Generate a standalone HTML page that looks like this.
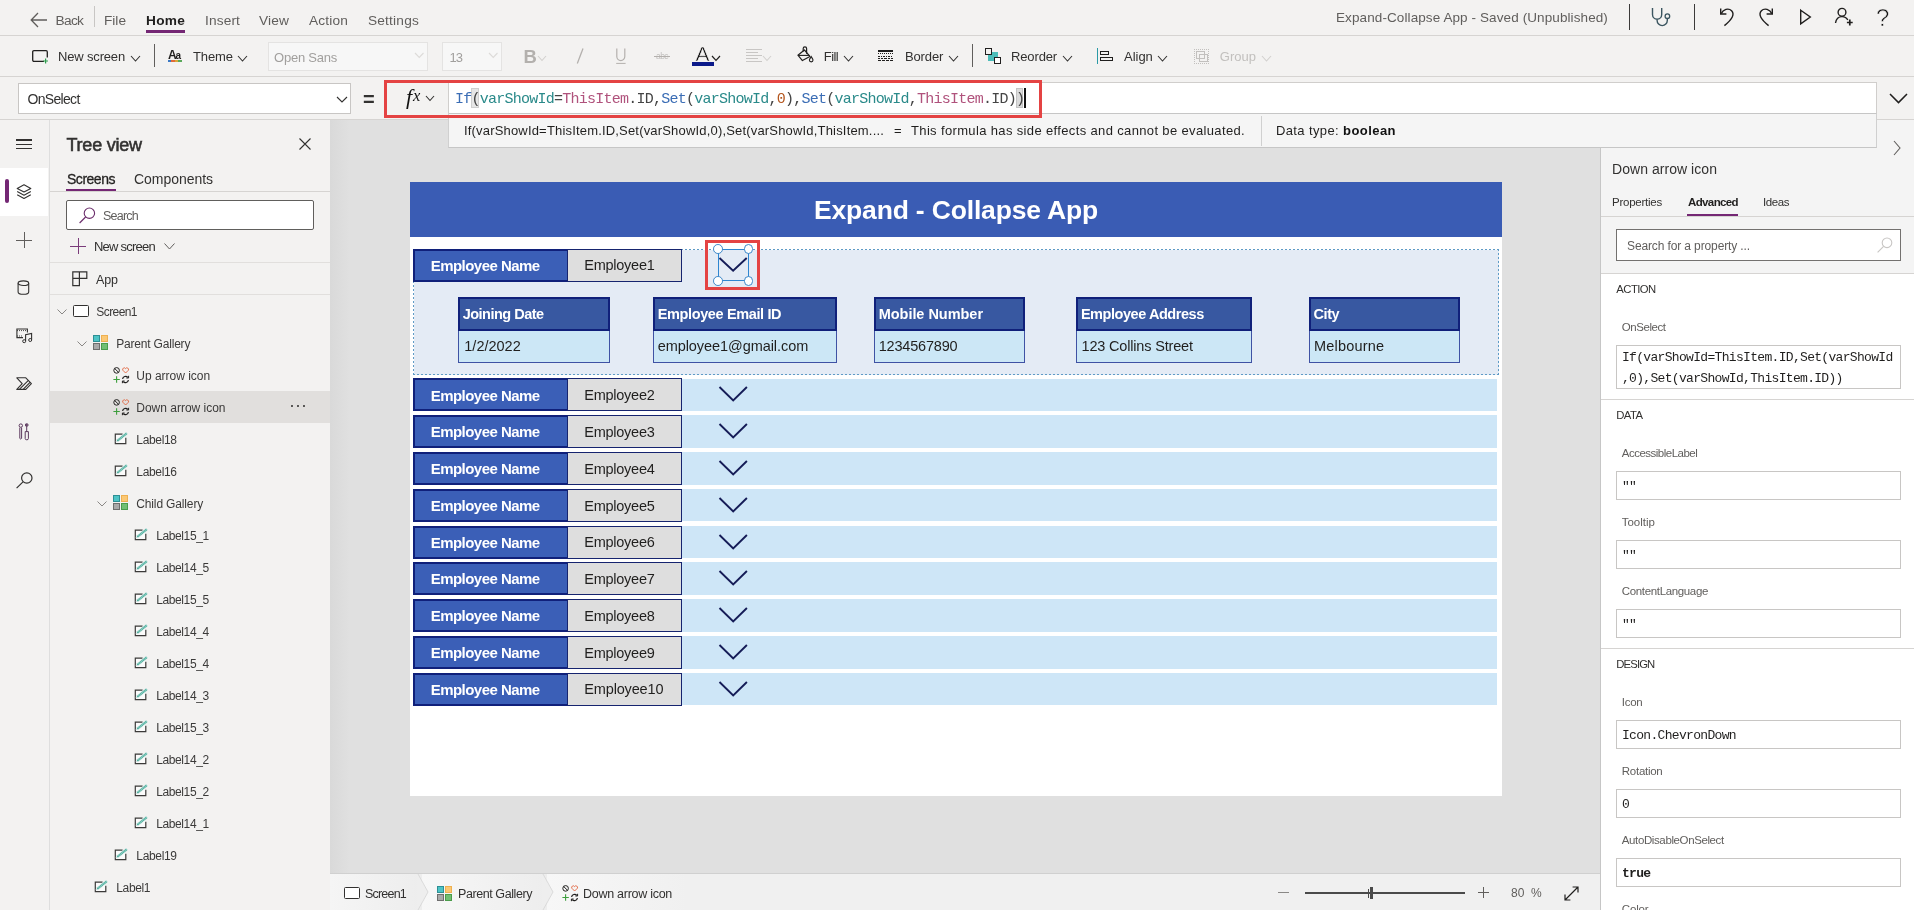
<!DOCTYPE html>
<html lang="en"><head><meta charset="utf-8"><title>Expand-Collapse App - Power Apps</title>
<style>
html,body{margin:0;padding:0;}
body{width:1914px;height:910px;overflow:hidden;background:#f3f2f1;position:relative;font-family:"Liberation Sans",sans-serif;}
#root{position:absolute;left:0;top:0;width:1914px;height:910px;overflow:hidden;will-change:transform;}
.a{position:absolute;box-sizing:border-box;}
.t{white-space:pre;}
svg{overflow:visible;}
.f-mono{font-family:"Liberation Mono",monospace;}
.f-dv{font-family:"DejaVu Sans",sans-serif;}
.f-serif{font-family:"Liberation Serif",serif;}
</style></head><body>
<div id="root">
<div class="a" style="left:0px;top:0px;width:1914px;height:910px;background:#f3f2f1;"></div>
<div class="a" style="left:330px;top:119px;width:1270px;height:754px;background:#e0e0e0;"></div>
<div class="a" style="left:330px;top:119px;width:20px;height:754px;background:linear-gradient(90deg,#d9d9d9,#e0e0e0);"></div>
<div class="a" style="left:1600px;top:119px;width:314px;height:791px;background:#ffffff;"></div>
<div class="a" style="left:1600px;top:119px;width:314px;height:154px;background:#f4f4f4;"></div>
<div class="a" style="left:1599.5px;top:147px;width:1.5px;height:763px;background:#c6c6c6;"></div>
<div class="a" style="left:330px;top:873px;width:1270px;height:37px;background:#f0f0f0;"></div>
<div class="a" style="left:330px;top:873px;width:1270px;height:1px;background:#d0d0d0;"></div>
<div class="a" style="left:330px;top:874px;width:92px;height:36px;background:linear-gradient(90deg,#f5f5f5,#ededed);"></div>
<div class="a" style="left:422px;top:874px;width:125px;height:36px;background:linear-gradient(90deg,#f7f7f7,#ededed);"></div>
<div class="a" style="left:547px;top:874px;width:140px;height:36px;background:linear-gradient(90deg,#f7f7f7,#f0f0f0);"></div>
<div class="a" style="left:0px;top:35px;width:1914px;height:1px;background:#d6d4d2;"></div>
<div class="a" style="left:0px;top:76px;width:1914px;height:1px;background:#d6d4d2;"></div>
<div class="a" style="left:0px;top:119px;width:1914px;height:1px;background:#d6d4d2;"></div>
<svg class="a" style="left:30px;top:12px;" width="18" height="16" viewBox="0 0 18 16"><path d="M17 8 H1.5 M8 1 L1.2 8 L8 15" fill="none" stroke="#605e5c" stroke-width="1.3"/></svg>
<span class="a t" style="left:55.5px;top:11.6px;font-size:13.7px;line-height:18px;color:#605e5c;letter-spacing:-0.659px;">Back</span>
<div class="a" style="left:94px;top:6px;width:1px;height:21px;background:#c8c6c4;"></div>
<span class="a t" style="left:104px;top:11.6px;font-size:13.7px;line-height:18px;color:#605e5c;letter-spacing:-0.016px;">File</span>
<span class="a t" style="left:146px;top:11.6px;font-size:13.7px;line-height:18px;color:#201f1e;letter-spacing:0.242px;font-weight:700;">Home</span>
<div class="a" style="left:146px;top:30px;width:39px;height:2.5px;background:#742774;"></div>
<span class="a t" style="left:205px;top:11.6px;font-size:13.7px;line-height:18px;color:#605e5c;letter-spacing:0.128px;">Insert</span>
<span class="a t" style="left:259px;top:11.6px;font-size:13.7px;line-height:18px;color:#605e5c;letter-spacing:0.145px;">View</span>
<span class="a t" style="left:309px;top:11.6px;font-size:13.7px;line-height:18px;color:#605e5c;letter-spacing:0.159px;">Action</span>
<span class="a t" style="left:368px;top:11.6px;font-size:13.7px;line-height:18px;color:#605e5c;letter-spacing:0.191px;">Settings</span>
<span class="a t" style="left:1336px;top:9.3px;font-size:13.5px;line-height:18px;color:#605e5c;letter-spacing:0.099px;">Expand-Collapse App - Saved (Unpublished)</span>
<div class="a" style="left:1628.5px;top:4px;width:1px;height:26px;background:#3b3a39;"></div>
<div class="a" style="left:1694px;top:4px;width:1px;height:26px;background:#3b3a39;"></div>
<span class="a t" style="left:58px;top:48.0px;font-size:13px;line-height:17px;color:#323130;letter-spacing:-0.164px;">New screen</span>
<svg class="a" style="left:130.0px;top:54.5px;" width="11" height="7" viewBox="0 0 11 7"><path d="M1 1 L5.5 6 L10 1" fill="none" stroke="#323130" stroke-width="1.1"/></svg>
<div class="a" style="left:154px;top:44px;width:1px;height:23px;background:#605e5c;"></div>
<span class="a t" style="left:193px;top:48.0px;font-size:13px;line-height:17px;color:#323130;letter-spacing:-0.094px;">Theme</span>
<svg class="a" style="left:237.0px;top:54.5px;" width="11" height="7" viewBox="0 0 11 7"><path d="M1 1 L5.5 6 L10 1" fill="none" stroke="#323130" stroke-width="1.1"/></svg>
<div class="a" style="left:268px;top:41.5px;width:160px;height:29px;background:#f7f7f7;border:1px solid #e4e3e2;"></div>
<span class="a t" style="left:274px;top:49.0px;font-size:13px;line-height:17px;color:#a19f9d;letter-spacing:-0.227px;">Open Sans</span>
<svg class="a" style="left:413.75px;top:52.25px;" width="10.5" height="6.5" viewBox="0 0 10.5 6.5"><path d="M1 1 L5.25 5.5 L9.5 1" fill="none" stroke="#dddbd9" stroke-width="1.1"/></svg>
<div class="a" style="left:442px;top:41.5px;width:60px;height:29px;background:#f7f7f7;border:1px solid #e4e3e2;"></div>
<span class="a t" style="left:449.4px;top:49.0px;font-size:13px;line-height:17px;color:#a19f9d;letter-spacing:-0.934px;">13</span>
<svg class="a" style="left:487.75px;top:52.25px;" width="10.5" height="6.5" viewBox="0 0 10.5 6.5"><path d="M1 1 L5.25 5.5 L9.5 1" fill="none" stroke="#dddbd9" stroke-width="1.1"/></svg>
<span class="a t" style="left:823.8px;top:48.0px;font-size:13px;line-height:17px;color:#323130;letter-spacing:-0.602px;">Fill</span>
<svg class="a" style="left:842.5px;top:54.5px;" width="11" height="7" viewBox="0 0 11 7"><path d="M1 1 L5.5 6 L10 1" fill="none" stroke="#323130" stroke-width="1.1"/></svg>
<span class="a t" style="left:905px;top:48.0px;font-size:13px;line-height:17px;color:#323130;letter-spacing:-0.139px;">Border</span>
<svg class="a" style="left:948.0px;top:54.5px;" width="11" height="7" viewBox="0 0 11 7"><path d="M1 1 L5.5 6 L10 1" fill="none" stroke="#323130" stroke-width="1.1"/></svg>
<div class="a" style="left:972px;top:44px;width:1px;height:23px;background:#605e5c;"></div>
<span class="a t" style="left:1011px;top:48.0px;font-size:13px;line-height:17px;color:#323130;letter-spacing:-0.138px;">Reorder</span>
<svg class="a" style="left:1061.5px;top:54.5px;" width="11" height="7" viewBox="0 0 11 7"><path d="M1 1 L5.5 6 L10 1" fill="none" stroke="#323130" stroke-width="1.1"/></svg>
<span class="a t" style="left:1124.1px;top:48.0px;font-size:13px;line-height:17px;color:#323130;letter-spacing:-0.044px;">Align</span>
<svg class="a" style="left:1157.0px;top:54.5px;" width="11" height="7" viewBox="0 0 11 7"><path d="M1 1 L5.5 6 L10 1" fill="none" stroke="#323130" stroke-width="1.1"/></svg>
<span class="a t" style="left:1219.8px;top:48.0px;font-size:13px;line-height:17px;color:#c2c0be;letter-spacing:-0.008px;">Group</span>
<svg class="a" style="left:1260.8px;top:54.5px;" width="11" height="7" viewBox="0 0 11 7"><path d="M1 1 L5.5 6 L10 1" fill="none" stroke="#d2d0ce" stroke-width="1.1"/></svg>
<div class="a" style="left:18px;top:83px;width:333px;height:31px;background:#ffffff;border:1px solid #c8c6c4;"></div>
<span class="a t" style="left:27.6px;top:90.4px;font-size:14px;line-height:18px;color:#323130;letter-spacing:-0.699px;">OnSelect</span>
<svg class="a" style="left:335.5px;top:95.5px;" width="12" height="7" viewBox="0 0 12 7"><path d="M1 1 L6.0 6 L11 1" fill="none" stroke="#323130" stroke-width="1.1"/></svg>
<span class="a t" style="left:363px;top:86.0px;font-size:20px;line-height:26px;color:#323130;letter-spacing:2.312px;font-weight:700;">=</span>
<div class="a" style="left:448px;top:82px;width:1429px;height:32px;background:#ffffff;border:1px solid #d0cecc;border-bottom-color:#c6c6c6;"></div>
<div class="a" style="left:389px;top:84px;width:59px;height:30px;background:#f3f2f1;"></div>
<div class="a" style="left:448px;top:114px;width:1429px;height:34px;background:#f5f5f5;border:1px solid #d0d0d0;border-bottom-color:#c6c6c6;border-top:none;"></div>
<div class="a" style="left:384px;top:80px;width:658px;height:38px;border:3px solid #e44343;"></div>
<span class="a t f-serif" style="left:406px;top:81.5px;font-size:22px;line-height:29px;color:#111111;font-style:italic;">f</span>
<span class="a t f-serif" style="left:413px;top:85.1px;font-size:16.5px;line-height:21px;color:#111111;font-style:italic;">x</span>
<svg class="a" style="left:425.0px;top:95.25px;" width="10" height="6.5" viewBox="0 0 10 6.5"><path d="M1 1 L5.0 5.5 L9 1" fill="none" stroke="#323130" stroke-width="1.1"/></svg>
<div class="a" style="left:448px;top:85px;width:1px;height:29px;background:#d0cecc;"></div>
<div class="a" style="left:470.5px;top:88px;width:8.25px;height:20px;background:#e6e6e6;border:1px solid #cfcfcf;"></div>
<div class="a" style="left:1016.0px;top:88px;width:7.25px;height:20px;background:#dcdcdc;border:1px solid #c4c4c4;"></div>
<span class="a t f-mono" style="left:455px;top:90.1px;font-size:15px;line-height:20px;letter-spacing:-0.752px;color:#444;"><span style="color:#3b6db5">If</span><span style="color:#444">(</span><span style="color:#2a8a8a">varShowId</span><span style="color:#444">=</span><span style="color:#b0527c">ThisItem</span><span style="color:#444">.ID,</span><span style="color:#3b6db5">Set</span><span style="color:#444">(</span><span style="color:#2a8a8a">varShowId</span><span style="color:#444">,</span><span style="color:#b4561e">0</span><span style="color:#444">),</span><span style="color:#3b6db5">Set</span><span style="color:#444">(</span><span style="color:#2a8a8a">varShowId</span><span style="color:#444">,</span><span style="color:#b0527c">ThisItem</span><span style="color:#444">.ID))</span></span>
<div class="a" style="left:1023.75px;top:88px;width:2px;height:20px;background:#111;"></div>
<span class="a t" style="left:464px;top:121.5px;font-size:13px;line-height:17px;color:#201f1e;letter-spacing:0.179px;">If(varShowId=ThisItem.ID,Set(varShowId,0),Set(varShowId,ThisItem....</span>
<span class="a t" style="left:894px;top:121.5px;font-size:13px;line-height:17px;color:#201f1e;letter-spacing:0.406px;">=</span>
<span class="a t" style="left:911px;top:121.5px;font-size:13px;line-height:17px;color:#201f1e;letter-spacing:0.355px;">This formula has side effects and cannot be evaluated.</span>
<div class="a" style="left:1261px;top:116px;width:1px;height:30px;background:#d0d0d0;"></div>
<span class="a t" style="left:1276px;top:121.5px;font-size:13px;line-height:17px;color:#201f1e;letter-spacing:0.375px;">Data type: </span>
<span class="a t" style="left:1343px;top:121.5px;font-size:13px;line-height:17px;color:#111;letter-spacing:0.451px;font-weight:700;">boolean</span>
<svg class="a" style="left:1888.5px;top:93px;" width="19" height="11" viewBox="0 0 19 11"><path d="M1 1 L9.5 9.6 L18 1" fill="none" stroke="#201f1e" stroke-width="1.5"/></svg>
<svg class="a" style="left:1893px;top:140px;" width="8" height="16" viewBox="0 0 8 16"><path d="M1 1 L7 8 L1 15" fill="none" stroke="#605e5c" stroke-width="1.1"/></svg>
<div class="a" style="left:0px;top:168px;width:48px;height:47.5px;background:#ffffff;"></div>
<div class="a" style="left:5px;top:179px;width:3.5px;height:24px;background:#742774;border-radius:2px;"></div>
<div class="a" style="left:49px;top:120px;width:1px;height:790px;background:#dedede;"></div>
<span class="a t" style="left:66.5px;top:133.5px;font-size:18px;line-height:23px;color:#323130;letter-spacing:-0.229px;-webkit-text-stroke:0.55px #323130;">Tree view</span>
<svg class="a" style="left:299px;top:138px;" width="12" height="12" viewBox="0 0 12 12"><path d="M0.5 0.5 L11.5 11.5 M11.5 0.5 L0.5 11.5" fill="none" stroke="#323130" stroke-width="1.1"/></svg>
<span class="a t" style="left:67px;top:169.5px;font-size:14px;line-height:18px;color:#201f1e;letter-spacing:-0.480px;-webkit-text-stroke:0.3px #201f1e;">Screens</span>
<div class="a" style="left:66px;top:189px;width:50px;height:2px;background:#742774;"></div>
<span class="a t" style="left:134px;top:169.5px;font-size:14px;line-height:18px;color:#323130;letter-spacing:-0.039px;">Components</span>
<div class="a" style="left:50px;top:191px;width:280px;height:1px;background:#d6d4d2;"></div>
<div class="a" style="left:66px;top:200px;width:248px;height:30px;background:#ffffff;border:1px solid #605e5c;border-radius:2px;"></div>
<span class="a t" style="left:103px;top:207.5px;font-size:12.5px;line-height:16px;color:#605e5c;letter-spacing:-0.768px;">Search</span>
<span class="a t" style="left:94px;top:238.0px;font-size:13px;line-height:17px;color:#323130;letter-spacing:-0.764px;">New screen</span>
<svg class="a" style="left:164px;top:243px;" width="11" height="7" viewBox="0 0 11 7"><path d="M0.5 0.5 L5.5 6 L10.5 0.5" fill="none" stroke="#605e5c" stroke-width="1"/></svg>
<div class="a" style="left:50px;top:262px;width:280px;height:1px;background:#e1dfdd;"></div>
<span class="a t" style="left:96px;top:271.5px;font-size:12.5px;line-height:16px;color:#323130;letter-spacing:-0.083px;">App</span>
<div class="a" style="left:50px;top:294px;width:280px;height:1px;background:#e1dfdd;"></div>
<div class="a" style="left:50px;top:391px;width:280px;height:32px;background:#e1dfdd;"></div>
<span class="a t" style="left:96.3px;top:303.5px;font-size:12px;line-height:16px;color:#3b3a39;letter-spacing:-0.586px;">Screen1</span>
<span class="a t" style="left:116.3px;top:335.5px;font-size:12px;line-height:16px;color:#3b3a39;letter-spacing:-0.200px;">Parent Gallery</span>
<span class="a t" style="left:136.3px;top:367.5px;font-size:12px;line-height:16px;color:#3b3a39;letter-spacing:-0.018px;">Up arrow icon</span>
<span class="a t" style="left:136.3px;top:399.5px;font-size:12px;line-height:16px;color:#3b3a39;letter-spacing:-0.012px;">Down arrow icon</span>
<span class="a t" style="left:136.3px;top:431.5px;font-size:12px;line-height:16px;color:#3b3a39;letter-spacing:-0.331px;">Label18</span>
<span class="a t" style="left:136.3px;top:463.5px;font-size:12px;line-height:16px;color:#3b3a39;letter-spacing:-0.331px;">Label16</span>
<span class="a t" style="left:136.3px;top:495.5px;font-size:12px;line-height:16px;color:#3b3a39;letter-spacing:-0.146px;">Child Gallery</span>
<span class="a t" style="left:156.3px;top:527.5px;font-size:12px;line-height:16px;color:#3b3a39;letter-spacing:-0.407px;">Label15_1</span>
<span class="a t" style="left:156.3px;top:559.5px;font-size:12px;line-height:16px;color:#3b3a39;letter-spacing:-0.407px;">Label14_5</span>
<span class="a t" style="left:156.3px;top:591.5px;font-size:12px;line-height:16px;color:#3b3a39;letter-spacing:-0.407px;">Label15_5</span>
<span class="a t" style="left:156.3px;top:623.5px;font-size:12px;line-height:16px;color:#3b3a39;letter-spacing:-0.407px;">Label14_4</span>
<span class="a t" style="left:156.3px;top:655.5px;font-size:12px;line-height:16px;color:#3b3a39;letter-spacing:-0.407px;">Label15_4</span>
<span class="a t" style="left:156.3px;top:687.5px;font-size:12px;line-height:16px;color:#3b3a39;letter-spacing:-0.407px;">Label14_3</span>
<span class="a t" style="left:156.3px;top:719.5px;font-size:12px;line-height:16px;color:#3b3a39;letter-spacing:-0.407px;">Label15_3</span>
<span class="a t" style="left:156.3px;top:751.5px;font-size:12px;line-height:16px;color:#3b3a39;letter-spacing:-0.407px;">Label14_2</span>
<span class="a t" style="left:156.3px;top:783.5px;font-size:12px;line-height:16px;color:#3b3a39;letter-spacing:-0.407px;">Label15_2</span>
<span class="a t" style="left:156.3px;top:815.5px;font-size:12px;line-height:16px;color:#3b3a39;letter-spacing:-0.407px;">Label14_1</span>
<span class="a t" style="left:136.3px;top:847.5px;font-size:12px;line-height:16px;color:#3b3a39;letter-spacing:-0.331px;">Label19</span>
<span class="a t" style="left:116.3px;top:879.5px;font-size:12px;line-height:16px;color:#3b3a39;letter-spacing:-0.358px;">Label1</span>
<div class="a" style="left:291.40000000000003px;top:405.3px;width:1.8px;height:1.8px;background:#323130;border-radius:50%;"></div>
<div class="a" style="left:297.40000000000003px;top:405.3px;width:1.8px;height:1.8px;background:#323130;border-radius:50%;"></div>
<div class="a" style="left:303.40000000000003px;top:405.3px;width:1.8px;height:1.8px;background:#323130;border-radius:50%;"></div>
<div class="a" style="left:409.6px;top:182px;width:1092.6px;height:614px;background:#ffffff;"></div>
<div class="a" style="left:409.6px;top:182px;width:1092.6px;height:55px;background:#3a5cb4;"></div>
<span class="a t" style="left:814px;top:193.0px;font-size:26.5px;line-height:34px;color:#ffffff;letter-spacing:-0.172px;font-weight:700;">Expand - Collapse App</span>
<div class="a" style="left:413.5px;top:249.5px;width:1085px;height:125px;background:#e4ebf5;"></div>
<div class="a" style="left:413px;top:248.8px;width:1086px;height:1.2px;background:repeating-linear-gradient(90deg,#5f9bc6 0,#5f9bc6 2.4px,transparent 2.4px,transparent 4px);"></div>
<div class="a" style="left:413px;top:373.8px;width:1086px;height:1.2px;background:repeating-linear-gradient(90deg,#5f9bc6 0,#5f9bc6 2.4px,transparent 2.4px,transparent 4px);"></div>
<div class="a" style="left:413.2px;top:249px;width:1.2px;height:125px;background:repeating-linear-gradient(180deg,#5f9bc6 0,#5f9bc6 2.4px,transparent 2.4px,transparent 4px);"></div>
<div class="a" style="left:1497.8px;top:249px;width:1.2px;height:125px;background:repeating-linear-gradient(180deg,#5f9bc6 0,#5f9bc6 2.4px,transparent 2.4px,transparent 4px);"></div>
<div class="a" style="left:413.3px;top:248.5px;width:155.7px;height:33px;background:#3b5fb7;border:2px solid #10207a;"></div>
<div class="a" style="left:567.3px;top:248.5px;width:114.8px;height:33px;background:#dedede;border:1.6px solid #16246f;"></div>
<span class="a t" style="left:430.7px;top:255.6px;font-size:15px;line-height:20px;color:#ffffff;letter-spacing:-0.530px;font-weight:700;">Employee Name</span>
<span class="a t" style="left:584.3px;top:256.3px;font-size:14.5px;line-height:19px;color:#201f1e;letter-spacing:-0.261px;">Employee1</span>
<div class="a" style="left:458px;top:330px;width:152px;height:33px;background:#cce7f6;border:1.5px solid #3f52a4;"></div>
<div class="a" style="left:458px;top:297px;width:152px;height:33.8px;background:#3858a1;border:2px solid #10207a;"></div>
<span class="a t" style="left:462.7px;top:305.3px;font-size:14.5px;line-height:19px;color:#ffffff;letter-spacing:-0.510px;font-weight:700;">Joining Date</span>
<span class="a t" style="left:464.3px;top:337.3px;font-size:14.5px;line-height:19px;color:#201f1e;letter-spacing:-0.007px;">1/2/2022</span>
<div class="a" style="left:652.7px;top:330px;width:184.3px;height:33px;background:#cce7f6;border:1.5px solid #3f52a4;"></div>
<div class="a" style="left:652.7px;top:297px;width:184.3px;height:33.8px;background:#3858a1;border:2px solid #10207a;"></div>
<span class="a t" style="left:657.7px;top:305.3px;font-size:14.5px;line-height:19px;color:#ffffff;letter-spacing:-0.368px;font-weight:700;">Employee Email ID</span>
<span class="a t" style="left:657.7px;top:337.3px;font-size:14.5px;line-height:19px;color:#201f1e;letter-spacing:-0.065px;">employee1@gmail.com</span>
<div class="a" style="left:873.5px;top:330px;width:151.5px;height:33px;background:#cce7f6;border:1.5px solid #3f52a4;"></div>
<div class="a" style="left:873.5px;top:297px;width:151.5px;height:33.8px;background:#3858a1;border:2px solid #10207a;"></div>
<span class="a t" style="left:878.7px;top:305.3px;font-size:14.5px;line-height:19px;color:#ffffff;letter-spacing:-0.033px;font-weight:700;">Mobile Number</span>
<span class="a t" style="left:878.7px;top:337.3px;font-size:14.5px;line-height:19px;color:#201f1e;letter-spacing:-0.196px;">1234567890</span>
<div class="a" style="left:1076px;top:330px;width:176px;height:33px;background:#cce7f6;border:1.5px solid #3f52a4;"></div>
<div class="a" style="left:1076px;top:297px;width:176px;height:33.8px;background:#3858a1;border:2px solid #10207a;"></div>
<span class="a t" style="left:1080.9px;top:305.3px;font-size:14.5px;line-height:19px;color:#ffffff;letter-spacing:-0.445px;font-weight:700;">Employee Address</span>
<span class="a t" style="left:1081.5px;top:337.3px;font-size:14.5px;line-height:19px;color:#201f1e;letter-spacing:-0.175px;">123 Collins Street</span>
<div class="a" style="left:1308.7px;top:330px;width:151.3px;height:33px;background:#cce7f6;border:1.5px solid #3f52a4;"></div>
<div class="a" style="left:1308.7px;top:297px;width:151.3px;height:33.8px;background:#3858a1;border:2px solid #10207a;"></div>
<span class="a t" style="left:1313.5px;top:305.3px;font-size:14.5px;line-height:19px;color:#ffffff;letter-spacing:-0.427px;font-weight:700;">City</span>
<span class="a t" style="left:1314.1px;top:337.3px;font-size:14.5px;line-height:19px;color:#201f1e;letter-spacing:0.187px;">Melbourne</span>
<div class="a" style="left:682px;top:378.59999999999997px;width:815px;height:32.6px;background:#cee6f7;"></div>
<div class="a" style="left:413.3px;top:378.4px;width:155.7px;height:33px;background:#3b5fb7;border:2px solid #10207a;"></div>
<div class="a" style="left:567.3px;top:378.4px;width:114.8px;height:33px;background:#dedede;border:1.6px solid #16246f;"></div>
<span class="a t" style="left:430.7px;top:385.5px;font-size:15px;line-height:20px;color:#ffffff;letter-spacing:-0.530px;font-weight:700;">Employee Name</span>
<span class="a t" style="left:584.3px;top:386.2px;font-size:14.5px;line-height:19px;color:#201f1e;letter-spacing:-0.261px;">Employee2</span>
<svg class="a" style="left:719px;top:386.4px;" width="28" height="16" viewBox="0 0 28 16"><path d="M0.5 1 L14.2 14.4 L27.9 1" fill="none" stroke="#151c57" stroke-width="1.9"/></svg>
<div class="a" style="left:682px;top:415.4px;width:815px;height:32.6px;background:#cee6f7;"></div>
<div class="a" style="left:413.3px;top:415.2px;width:155.7px;height:33px;background:#3b5fb7;border:2px solid #10207a;"></div>
<div class="a" style="left:567.3px;top:415.2px;width:114.8px;height:33px;background:#dedede;border:1.6px solid #16246f;"></div>
<span class="a t" style="left:430.7px;top:422.3px;font-size:15px;line-height:20px;color:#ffffff;letter-spacing:-0.530px;font-weight:700;">Employee Name</span>
<span class="a t" style="left:584.3px;top:423.0px;font-size:14.5px;line-height:19px;color:#201f1e;letter-spacing:-0.261px;">Employee3</span>
<svg class="a" style="left:719px;top:423.2px;" width="28" height="16" viewBox="0 0 28 16"><path d="M0.5 1 L14.2 14.4 L27.9 1" fill="none" stroke="#151c57" stroke-width="1.9"/></svg>
<div class="a" style="left:682px;top:452.09999999999997px;width:815px;height:32.6px;background:#cee6f7;"></div>
<div class="a" style="left:413.3px;top:451.9px;width:155.7px;height:33px;background:#3b5fb7;border:2px solid #10207a;"></div>
<div class="a" style="left:567.3px;top:451.9px;width:114.8px;height:33px;background:#dedede;border:1.6px solid #16246f;"></div>
<span class="a t" style="left:430.7px;top:459.0px;font-size:15px;line-height:20px;color:#ffffff;letter-spacing:-0.530px;font-weight:700;">Employee Name</span>
<span class="a t" style="left:584.3px;top:459.7px;font-size:14.5px;line-height:19px;color:#201f1e;letter-spacing:-0.261px;">Employee4</span>
<svg class="a" style="left:719px;top:459.9px;" width="28" height="16" viewBox="0 0 28 16"><path d="M0.5 1 L14.2 14.4 L27.9 1" fill="none" stroke="#151c57" stroke-width="1.9"/></svg>
<div class="a" style="left:682px;top:488.9px;width:815px;height:32.6px;background:#cee6f7;"></div>
<div class="a" style="left:413.3px;top:488.7px;width:155.7px;height:33px;background:#3b5fb7;border:2px solid #10207a;"></div>
<div class="a" style="left:567.3px;top:488.7px;width:114.8px;height:33px;background:#dedede;border:1.6px solid #16246f;"></div>
<span class="a t" style="left:430.7px;top:495.8px;font-size:15px;line-height:20px;color:#ffffff;letter-spacing:-0.530px;font-weight:700;">Employee Name</span>
<span class="a t" style="left:584.3px;top:496.5px;font-size:14.5px;line-height:19px;color:#201f1e;letter-spacing:-0.261px;">Employee5</span>
<svg class="a" style="left:719px;top:496.7px;" width="28" height="16" viewBox="0 0 28 16"><path d="M0.5 1 L14.2 14.4 L27.9 1" fill="none" stroke="#151c57" stroke-width="1.9"/></svg>
<div class="a" style="left:682px;top:525.7px;width:815px;height:32.6px;background:#cee6f7;"></div>
<div class="a" style="left:413.3px;top:525.5px;width:155.7px;height:33px;background:#3b5fb7;border:2px solid #10207a;"></div>
<div class="a" style="left:567.3px;top:525.5px;width:114.8px;height:33px;background:#dedede;border:1.6px solid #16246f;"></div>
<span class="a t" style="left:430.7px;top:532.6px;font-size:15px;line-height:20px;color:#ffffff;letter-spacing:-0.530px;font-weight:700;">Employee Name</span>
<span class="a t" style="left:584.3px;top:533.3px;font-size:14.5px;line-height:19px;color:#201f1e;letter-spacing:-0.261px;">Employee6</span>
<svg class="a" style="left:719px;top:533.5px;" width="28" height="16" viewBox="0 0 28 16"><path d="M0.5 1 L14.2 14.4 L27.9 1" fill="none" stroke="#151c57" stroke-width="1.9"/></svg>
<div class="a" style="left:682px;top:562.4000000000001px;width:815px;height:32.6px;background:#cee6f7;"></div>
<div class="a" style="left:413.3px;top:562.2px;width:155.7px;height:33px;background:#3b5fb7;border:2px solid #10207a;"></div>
<div class="a" style="left:567.3px;top:562.2px;width:114.8px;height:33px;background:#dedede;border:1.6px solid #16246f;"></div>
<span class="a t" style="left:430.7px;top:569.3px;font-size:15px;line-height:20px;color:#ffffff;letter-spacing:-0.530px;font-weight:700;">Employee Name</span>
<span class="a t" style="left:584.3px;top:570.0px;font-size:14.5px;line-height:19px;color:#201f1e;letter-spacing:-0.261px;">Employee7</span>
<svg class="a" style="left:719px;top:570.2px;" width="28" height="16" viewBox="0 0 28 16"><path d="M0.5 1 L14.2 14.4 L27.9 1" fill="none" stroke="#151c57" stroke-width="1.9"/></svg>
<div class="a" style="left:682px;top:599.2px;width:815px;height:32.6px;background:#cee6f7;"></div>
<div class="a" style="left:413.3px;top:599.0px;width:155.7px;height:33px;background:#3b5fb7;border:2px solid #10207a;"></div>
<div class="a" style="left:567.3px;top:599.0px;width:114.8px;height:33px;background:#dedede;border:1.6px solid #16246f;"></div>
<span class="a t" style="left:430.7px;top:606.1px;font-size:15px;line-height:20px;color:#ffffff;letter-spacing:-0.530px;font-weight:700;">Employee Name</span>
<span class="a t" style="left:584.3px;top:606.8px;font-size:14.5px;line-height:19px;color:#201f1e;letter-spacing:-0.261px;">Employee8</span>
<svg class="a" style="left:719px;top:607.0px;" width="28" height="16" viewBox="0 0 28 16"><path d="M0.5 1 L14.2 14.4 L27.9 1" fill="none" stroke="#151c57" stroke-width="1.9"/></svg>
<div class="a" style="left:682px;top:636.0px;width:815px;height:32.6px;background:#cee6f7;"></div>
<div class="a" style="left:413.3px;top:635.8px;width:155.7px;height:33px;background:#3b5fb7;border:2px solid #10207a;"></div>
<div class="a" style="left:567.3px;top:635.8px;width:114.8px;height:33px;background:#dedede;border:1.6px solid #16246f;"></div>
<span class="a t" style="left:430.7px;top:642.9px;font-size:15px;line-height:20px;color:#ffffff;letter-spacing:-0.530px;font-weight:700;">Employee Name</span>
<span class="a t" style="left:584.3px;top:643.6px;font-size:14.5px;line-height:19px;color:#201f1e;letter-spacing:-0.261px;">Employee9</span>
<svg class="a" style="left:719px;top:643.8px;" width="28" height="16" viewBox="0 0 28 16"><path d="M0.5 1 L14.2 14.4 L27.9 1" fill="none" stroke="#151c57" stroke-width="1.9"/></svg>
<div class="a" style="left:682px;top:672.8000000000001px;width:815px;height:32.6px;background:#cee6f7;"></div>
<div class="a" style="left:413.3px;top:672.6px;width:155.7px;height:33px;background:#3b5fb7;border:2px solid #10207a;"></div>
<div class="a" style="left:567.3px;top:672.6px;width:114.8px;height:33px;background:#dedede;border:1.6px solid #16246f;"></div>
<span class="a t" style="left:430.7px;top:679.7px;font-size:15px;line-height:20px;color:#ffffff;letter-spacing:-0.530px;font-weight:700;">Employee Name</span>
<span class="a t" style="left:584.3px;top:680.4px;font-size:14.5px;line-height:19px;color:#201f1e;letter-spacing:-0.161px;">Employee10</span>
<svg class="a" style="left:719px;top:680.6px;" width="28" height="16" viewBox="0 0 28 16"><path d="M0.5 1 L14.2 14.4 L27.9 1" fill="none" stroke="#151c57" stroke-width="1.9"/></svg>
<svg class="a" style="left:719px;top:257px;" width="28" height="16" viewBox="0 0 28 16"><path d="M0.5 1 L14.1 13.8 L27.7 1" fill="none" stroke="#151c57" stroke-width="1.9"/></svg>
<div class="a" style="left:717.6px;top:248.5px;width:31.3px;height:32.8px;border:1px solid #2f86d0;"></div>
<div class="a" style="left:713.2px;top:244.1px;width:9.8px;height:9.8px;background:#ffffff;border:1px solid #3a86c8;border-radius:50%;"></div>
<div class="a" style="left:743.5px;top:244.1px;width:9.8px;height:9.8px;background:#ffffff;border:1px solid #3a86c8;border-radius:50%;"></div>
<div class="a" style="left:713.2px;top:275.90000000000003px;width:9.8px;height:9.8px;background:#ffffff;border:1px solid #3a86c8;border-radius:50%;"></div>
<div class="a" style="left:743.5px;top:275.90000000000003px;width:9.8px;height:9.8px;background:#ffffff;border:1px solid #3a86c8;border-radius:50%;"></div>
<div class="a" style="left:705px;top:240px;width:55px;height:50px;border:3px solid #e44343;"></div>
<span class="a t" style="left:365px;top:885.5px;font-size:12.5px;line-height:16px;color:#323130;letter-spacing:-0.795px;">Screen1</span>
<span class="a t" style="left:458px;top:885.5px;font-size:12.5px;line-height:16px;color:#323130;letter-spacing:-0.422px;">Parent Gallery</span>
<span class="a t" style="left:583px;top:885.5px;font-size:12.5px;line-height:16px;color:#323130;letter-spacing:-0.273px;">Down arrow icon</span>
<span class="a t" style="left:1511px;top:885.0px;font-size:12px;line-height:16px;color:#605e5c;">80</span>
<span class="a t" style="left:1531px;top:885.0px;font-size:12px;line-height:16px;color:#605e5c;">%</span>
<span class="a t" style="left:1612px;top:159.8px;font-size:14px;line-height:18px;color:#323130;letter-spacing:0.049px;">Down arrow icon</span>
<span class="a t" style="left:1612px;top:195.0px;font-size:11.5px;line-height:15px;color:#323130;letter-spacing:-0.242px;">Properties</span>
<span class="a t" style="left:1688px;top:195.0px;font-size:11.5px;line-height:15px;color:#201f1e;letter-spacing:-0.621px;font-weight:700;">Advanced</span>
<span class="a t" style="left:1763px;top:195.0px;font-size:11.5px;line-height:15px;color:#323130;letter-spacing:-0.428px;">Ideas</span>
<div class="a" style="left:1687px;top:214px;width:51px;height:2px;background:#742774;"></div>
<div class="a" style="left:1601px;top:216px;width:313px;height:1px;background:#d6d4d2;"></div>
<div class="a" style="left:1616px;top:229px;width:285px;height:32px;background:#ffffff;border:1px solid #73716f;"></div>
<span class="a t" style="left:1627px;top:237.5px;font-size:12px;line-height:16px;color:#605e5c;letter-spacing:-0.122px;">Search for a property ...</span>
<div class="a" style="left:1601px;top:272.5px;width:313px;height:1px;background:#d6d4d2;"></div>
<span class="a t" style="left:1616.3px;top:281.8px;font-size:11.3px;line-height:15px;color:#323130;letter-spacing:-0.548px;">ACTION</span>
<span class="a t" style="left:1621.8px;top:319.5px;font-size:11.5px;line-height:15px;color:#605e5c;letter-spacing:-0.452px;">OnSelect</span>
<div class="a" style="left:1616px;top:345px;width:285px;height:44px;background:#ffffff;border:1px solid #c8c6c4;"></div>
<span class="a t f-mono" style="left:1622px;top:348.5px;font-size:13px;line-height:17px;color:#201f1e;letter-spacing:-0.681px;">If(varShowId=ThisItem.ID,Set(varShowId</span>
<span class="a t f-mono" style="left:1622px;top:369.5px;font-size:13px;line-height:17px;color:#201f1e;letter-spacing:-0.681px;">,0),Set(varShowId,ThisItem.ID))</span>
<div class="a" style="left:1601px;top:399px;width:313px;height:1px;background:#d6d4d2;"></div>
<span class="a t" style="left:1616.3px;top:407.8px;font-size:11.3px;line-height:15px;color:#323130;letter-spacing:-0.588px;">DATA</span>
<span class="a t" style="left:1621.8px;top:445.5px;font-size:11.5px;line-height:15px;color:#605e5c;letter-spacing:-0.507px;">AccessibleLabel</span>
<div class="a" style="left:1616px;top:471px;width:285px;height:29px;background:#ffffff;border:1px solid #c8c6c4;"></div>
<span class="a t f-mono" style="left:1622px;top:477.5px;font-size:13px;line-height:17px;color:#201f1e;letter-spacing:-0.685px;">&quot;&quot;</span>
<span class="a t" style="left:1621.8px;top:514.5px;font-size:11.5px;line-height:15px;color:#605e5c;letter-spacing:-0.036px;">Tooltip</span>
<div class="a" style="left:1616px;top:540px;width:285px;height:29px;background:#ffffff;border:1px solid #c8c6c4;"></div>
<span class="a t f-mono" style="left:1622px;top:546.5px;font-size:13px;line-height:17px;color:#201f1e;letter-spacing:-0.685px;">&quot;&quot;</span>
<span class="a t" style="left:1621.8px;top:583.5px;font-size:11.5px;line-height:15px;color:#605e5c;letter-spacing:-0.350px;">ContentLanguage</span>
<div class="a" style="left:1616px;top:609px;width:285px;height:29px;background:#ffffff;border:1px solid #c8c6c4;"></div>
<span class="a t f-mono" style="left:1622px;top:615.5px;font-size:13px;line-height:17px;color:#201f1e;letter-spacing:-0.685px;">&quot;&quot;</span>
<div class="a" style="left:1601px;top:648px;width:313px;height:1px;background:#d6d4d2;"></div>
<span class="a t" style="left:1616.3px;top:656.8px;font-size:11.3px;line-height:15px;color:#323130;letter-spacing:-0.869px;">DESIGN</span>
<span class="a t" style="left:1621.8px;top:694.5px;font-size:11.5px;line-height:15px;color:#605e5c;letter-spacing:-0.287px;">Icon</span>
<div class="a" style="left:1616px;top:720px;width:285px;height:29px;background:#ffffff;border:1px solid #c8c6c4;"></div>
<span class="a t f-mono" style="left:1622px;top:726.5px;font-size:13px;line-height:17px;color:#201f1e;letter-spacing:-0.682px;">Icon.ChevronDown</span>
<span class="a t" style="left:1621.8px;top:763.5px;font-size:11.5px;line-height:15px;color:#605e5c;letter-spacing:-0.268px;">Rotation</span>
<div class="a" style="left:1616px;top:789px;width:285px;height:29px;background:#ffffff;border:1px solid #c8c6c4;"></div>
<span class="a t f-mono" style="left:1622px;top:795.5px;font-size:13px;line-height:17px;color:#201f1e;letter-spacing:-0.692px;">0</span>
<span class="a t" style="left:1621.8px;top:832.5px;font-size:11.5px;line-height:15px;color:#605e5c;letter-spacing:-0.385px;">AutoDisableOnSelect</span>
<div class="a" style="left:1616px;top:858px;width:285px;height:29px;background:#ffffff;border:1px solid #c8c6c4;"></div>
<span class="a t f-mono" style="left:1622px;top:864.5px;font-size:13px;line-height:17px;color:#201f1e;letter-spacing:-0.685px;font-weight:700;">true</span>
<span class="a t" style="left:1621.8px;top:901.5px;font-size:11.5px;line-height:15px;color:#605e5c;letter-spacing:-0.177px;">Color</span>
<svg class="a" style="left:1651px;top:7px;" width="21" height="20" viewBox="0 0 21 20"><path d="M1.5 1 V7.5 A4.6 4.6 0 0 0 10.7 7.5 V1 M6.1 12.2 V13.5 A5 5 0 0 0 16.3 13.5 V11.6" fill="none" stroke="#3b5560" stroke-width="1.4"/><circle cx="16.4" cy="9.2" r="2.3" fill="none" stroke="#3b5560" stroke-width="1.3"/></svg>
<svg class="a" style="left:1719px;top:7px;" width="16" height="20" viewBox="0 0 16 20"><path d="M1.7 1.5 V7 H7.4" fill="none" stroke="#201f1e" stroke-width="1.4"/><path d="M2.2 6.6 C4 2.4 9.5 0.6 12.6 3.8 C15.8 7.2 13.6 12 5.4 18.6" fill="none" stroke="#201f1e" stroke-width="1.4"/></svg>
<svg class="a" style="left:1758px;top:7px;" width="16" height="20" viewBox="0 0 16 20"><path d="M14.3 1.5 V7 H8.6" fill="none" stroke="#201f1e" stroke-width="1.4"/><path d="M13.8 6.6 C12 2.4 6.5 0.6 3.4 3.8 C0.2 7.2 2.4 12 10.6 18.6" fill="none" stroke="#201f1e" stroke-width="1.4"/></svg>
<svg class="a" style="left:1799px;top:9px;" width="13" height="16" viewBox="0 0 13 16"><path d="M1.7 1.2 L11.3 8 L1.7 14.8 Z" fill="none" stroke="#201f1e" stroke-width="1.4" stroke-linejoin="miter"/></svg>
<svg class="a" style="left:1834px;top:7px;" width="20" height="20" viewBox="0 0 20 20"><circle cx="8" cy="5.3" r="3.9" fill="none" stroke="#201f1e" stroke-width="1.4"/><path d="M1.5 16 C2.2 11.5 5 9.6 8 9.6 C10.6 9.6 12.6 10.8 13.8 13" fill="none" stroke="#201f1e" stroke-width="1.4"/><path d="M15.8 12.6 V18.4 M12.9 15.5 H18.7" fill="none" stroke="#201f1e" stroke-width="1.7"/></svg>
<span class="a t" style="left:1876px;top:1.5px;font-size:24px;line-height:31px;color:#111111;-webkit-text-stroke:0.55px #f3f2f1;">?</span>
<svg class="a" style="left:32px;top:50px;" width="17" height="13" viewBox="0 0 17 13"><path d="M12 11.3 H1.9 A1.2 1.2 0 0 1 0.7 10.1 V1.9 A1.2 1.2 0 0 1 1.9 0.7 H14.1 A1.2 1.2 0 0 1 15.3 1.9 V7.5" fill="none" stroke="#201f1e" stroke-width="1.3"/><path d="M13.6 8.6 V13.4 M11.2 11 H16" fill="none" stroke="#2e9e4f" stroke-width="1.2"/></svg>
<span class="a t" style="left:168px;top:46.5px;font-size:12px;line-height:16px;color:#201f1e;font-weight:700;">A</span>
<span class="a t" style="left:175.6px;top:49.0px;font-size:10px;line-height:13px;color:#201f1e;font-weight:700;">a</span>
<div class="a" style="left:168px;top:60px;width:3.4px;height:2px;background:#3b79c4;"></div>
<div class="a" style="left:171.4px;top:60px;width:3.4px;height:2px;background:#e06a3a;"></div>
<div class="a" style="left:174.8px;top:60px;width:3.4px;height:2px;background:#d9a73a;"></div>
<div class="a" style="left:178.2px;top:60px;width:3.4px;height:2px;background:#5aa85a;"></div>
<span class="a t" style="left:523.4px;top:44.5px;font-size:18.5px;line-height:24px;color:#b3b0ad;letter-spacing:-2.975px;font-weight:700;">B</span>
<svg class="a" style="left:537.4px;top:54.95px;" width="10" height="6.5" viewBox="0 0 10 6.5"><path d="M1 1 L5.0 5.5 L9 1" fill="none" stroke="#d2d0ce" stroke-width="1.1"/></svg>
<svg class="a" style="left:576px;top:48px;" width="8" height="16" viewBox="0 0 8 16"><path d="M7 0.5 L1.3 15.5" fill="none" stroke="#b3b0ad" stroke-width="1.3"/></svg>
<svg class="a" style="left:616px;top:48px;" width="10" height="16" viewBox="0 0 10 16"><path d="M0.8 0.4 V8.6 A4 4 0 0 0 8.8 8.6 V0.4" fill="none" stroke="#b3b0ad" stroke-width="1.2"/><path d="M0.2 15.4 H9.6" stroke="#b3b0ad" stroke-width="1"/></svg>
<span class="a t" style="left:656px;top:50.5px;font-size:8.5px;line-height:11px;color:#c2c0be;letter-spacing:-0.573px;">abc</span>
<div class="a" style="left:654px;top:56px;width:16px;height:1px;background:#b3b0ad;"></div>
<span class="a t" style="left:695.5px;top:40.0px;font-size:21px;line-height:27px;color:#111111;letter-spacing:0.484px;-webkit-text-stroke:0.6px #f3f2f1;">A</span>
<div class="a" style="left:692px;top:62px;width:22px;height:3.6px;background:#0b1a8a;"></div>
<svg class="a" style="left:711.2px;top:54.95px;" width="10" height="6.5" viewBox="0 0 10 6.5"><path d="M1 1 L5.0 5.5 L9 1" fill="none" stroke="#201f1e" stroke-width="1.15"/></svg>
<div class="a" style="left:746px;top:49px;width:16px;height:1px;background:#c8c6c4;"></div>
<div class="a" style="left:746px;top:52px;width:12px;height:1px;background:#c8c6c4;"></div>
<div class="a" style="left:746px;top:55px;width:16px;height:1px;background:#c8c6c4;"></div>
<div class="a" style="left:746px;top:58px;width:12px;height:1px;background:#c8c6c4;"></div>
<div class="a" style="left:746px;top:61px;width:16px;height:1px;background:#c8c6c4;"></div>
<svg class="a" style="left:762.0px;top:54.95px;" width="10" height="6.5" viewBox="0 0 10 6.5"><path d="M1 1 L5.0 5.5 L9 1" fill="none" stroke="#d2d0ce" stroke-width="1.1"/></svg>
<svg class="a" style="left:797px;top:46px;" width="17" height="16" viewBox="0 0 17 16"><path d="M6.2 5.6 V2.6 A1.7 1.7 0 0 1 9.6 2.6 V7.8" fill="none" stroke="#201f1e" stroke-width="1.2"/><path d="M0.9 9.2 L7.4 4 L12.9 10.4 L5.4 14.6 Z" fill="none" stroke="#201f1e" stroke-width="1.2" stroke-linejoin="round"/><path d="M1.2 9.4 H12.3" stroke="#201f1e" stroke-width="1.1"/><path d="M14.2 10.6 C15.4 12.4 16 13.2 16 14.1 A1.8 1.8 0 0 1 12.4 14.1 C12.4 13.2 13 12.4 14.2 10.6 Z" fill="none" stroke="#201f1e" stroke-width="1.1"/></svg>
<svg class="a" style="left:878px;top:50px;" width="16" height="12" viewBox="0 0 16 12"><g shape-rendering="crispEdges"><path d="M0 1.1 H15.4" stroke="#201f1e" stroke-width="1.6"/><path d="M0 3.8 H15.4" stroke="#201f1e" stroke-width="1" stroke-dasharray="1 1"/><path d="M0 6 H15.4" stroke="#201f1e" stroke-width="1" stroke-dasharray="1.5 1"/><path d="M0 8.2 H15.4" stroke="#201f1e" stroke-width="1.1" stroke-dasharray="2.2 1"/><path d="M0 10.6 H15.4" stroke="#201f1e" stroke-width="1.5" stroke-dasharray="3 1"/></g></svg>
<div class="a" style="left:988px;top:51.5px;width:10px;height:9px;background:#4cbdb9;"></div>
<div class="a" style="left:985px;top:48px;width:7px;height:7px;background:#f3f2f1;border:1.2px solid #201f1e;"></div>
<div class="a" style="left:994px;top:57px;width:7px;height:7px;background:#ffffff;border:1.2px solid #201f1e;"></div>
<div class="a" style="left:1097px;top:48px;width:1.3px;height:16px;background:#2a9aa6;"></div>
<div class="a" style="left:1100px;top:51px;width:9px;height:4.4px;border:1.2px solid #201f1e;"></div>
<div class="a" style="left:1100px;top:57px;width:13px;height:4.4px;border:1.2px solid #201f1e;"></div>
<div class="a" style="left:1193.5px;top:48.5px;width:15.5px;height:15.5px;border:1.3px dotted #c2c0be;"></div>
<div class="a" style="left:1196px;top:50.5px;width:8.5px;height:8.5px;border:1.1px solid #c2c0be;"></div>
<div class="a" style="left:1199px;top:53.5px;width:8.5px;height:8.5px;border:1.1px solid #c2c0be;"></div>
<div class="a" style="left:16px;top:139.4px;width:16.4px;height:1.2px;background:#323130;"></div>
<div class="a" style="left:16px;top:143.70000000000002px;width:16.4px;height:1.2px;background:#323130;"></div>
<div class="a" style="left:16px;top:148.0px;width:16.4px;height:1.2px;background:#323130;"></div>
<svg class="a" style="left:16px;top:184px;" width="16" height="16" viewBox="0 0 16 16"><path d="M8 0.8 L14.8 4.4 L8 8 L1.2 4.4 Z" fill="none" stroke="#323130" stroke-width="1.1" stroke-linejoin="round"/><path d="M1.2 7.6 L8 11.2 L14.8 7.6 M1.2 10.8 L8 14.4 L14.8 10.8" fill="none" stroke="#323130" stroke-width="1.1" stroke-linejoin="round"/></svg>
<div class="a" style="left:16.3px;top:239.5px;width:16.2px;height:1.1px;background:#605e5c;"></div>
<div class="a" style="left:23.9px;top:232px;width:1.1px;height:16.2px;background:#605e5c;"></div>
<svg class="a" style="left:17px;top:280px;" width="13" height="16" viewBox="0 0 13 16"><ellipse cx="6.4" cy="3.2" rx="5.3" ry="2.3" fill="none" stroke="#323130" stroke-width="1.1"/><path d="M1.1 3.2 V12 A5.3 2.3 0 0 0 11.7 12 V3.2" fill="none" stroke="#323130" stroke-width="1.1"/></svg>
<svg class="a" style="left:16px;top:328px;" width="17" height="16" viewBox="0 0 17 16"><path d="M7 9.6 H0.9 V1 H11.4 V4.5" fill="none" stroke="#323130" stroke-width="1.1"/><path d="M1 2.6 H11.3 M1 8 H7" stroke="#323130" stroke-width="0.9" stroke-dasharray="1 1"/><path d="M9.6 13 V6.6 L15.6 5.4 V11.8" fill="none" stroke="#323130" stroke-width="1.1"/><circle cx="8.2" cy="13.2" r="1.5" fill="none" stroke="#323130" stroke-width="1"/><circle cx="14.2" cy="12" r="1.5" fill="none" stroke="#323130" stroke-width="1"/></svg>
<svg class="a" style="left:16px;top:377px;" width="17" height="14" viewBox="0 0 17 14"><path d="M0.8 0.8 H9.8 L15.4 6.6 L9.8 12.4 H0.8 L6.2 6.6 Z" fill="none" stroke="#323130" stroke-width="1.1" stroke-linejoin="round"/><path d="M3.6 12.2 L12.4 3.4 M7.4 12.2 L14 5.4" stroke="#323130" stroke-width="1.1"/></svg>
<svg class="a" style="left:19px;top:423px;" width="11" height="18" viewBox="0 0 11 18"><path d="M2.6 4.6 V15.4 A1.1 1.1 0 0 1 0.8 15.4 V4.6" fill="none" stroke="#5c3a5e" stroke-width="1"/><circle cx="1.8" cy="2.6" r="1.7" fill="none" stroke="#5c3a5e" stroke-width="1"/><path d="M7.7 0.6 V8.4 M6.2 8.6 H9.4 V15.6 A1.6 1.2 0 0 1 6.2 15.6 Z M6.6 1 H8.9 V3 H6.6Z" fill="none" stroke="#5c3a5e" stroke-width="1"/></svg>
<svg class="a" style="left:16px;top:472px;" width="17" height="17" viewBox="0 0 17 17"><circle cx="10.8" cy="6" r="5.2" fill="none" stroke="#323130" stroke-width="1.2"/><path d="M7 9.8 L0.6 16.2" stroke="#323130" stroke-width="1.2"/></svg>
<svg class="a" style="left:79px;top:207px;" width="17" height="17" viewBox="0 0 17 17"><circle cx="10.4" cy="6.2" r="5.2" fill="none" stroke="#6b2d6b" stroke-width="1.1"/><path d="M6.6 10 L0.6 16" stroke="#6b2d6b" stroke-width="1.1"/></svg>
<div class="a" style="left:70px;top:245.5px;width:16.4px;height:1.1px;background:#7a3b7a;"></div>
<div class="a" style="left:77.6px;top:238px;width:1.1px;height:16.2px;background:#7a3b7a;"></div>
<svg class="a" style="left:72px;top:271px;" width="16" height="16" viewBox="0 0 16 16"><path d="M0.8 0.8 H14.8 V7.4 H7.4 V14.6 H0.8 Z M7.4 0.8 V7.4 M0.8 7.4 H7.4" fill="none" stroke="#323130" stroke-width="1.2"/></svg>
<svg class="a" style="left:57px;top:308.5px;" width="10" height="6" viewBox="0 0 10 6"><path d="M0.5 0.5 L5 5 L9.5 0.5" fill="none" stroke="#8a8886" stroke-width="1"/></svg>
<div class="a" style="left:73px;top:305.3px;width:16px;height:11.5px;background:#ffffff;border:1.2px solid #323130;border-radius:1.5px;"></div>
<svg class="a" style="left:77px;top:340.5px;" width="10" height="6" viewBox="0 0 10 6"><path d="M0.5 0.5 L5 5 L9.5 0.5" fill="none" stroke="#8a8886" stroke-width="1"/></svg>
<div class="a" style="left:93px;top:335px;width:7px;height:7px;background:#4cc3c5;border:1px solid #2d8f94;"></div>
<div class="a" style="left:101.2px;top:335px;width:7px;height:7px;background:#fbc874;border:1px solid #eeb050;"></div>
<div class="a" style="left:93px;top:343.2px;width:7px;height:7px;background:#a9a9a9;border:1px solid #6e6e6e;"></div>
<div class="a" style="left:101.2px;top:343.2px;width:7px;height:7px;background:#72bf72;border:1px solid #4a9c4a;"></div>
<svg class="a" style="left:113px;top:367px;" width="17" height="16" viewBox="0 0 17 16"><circle cx="3.6" cy="3.4" r="2.8" fill="none" stroke="#201f1e" stroke-width="1"/><path d="M1.7 1.5 L5.5 5.3" stroke="#201f1e" stroke-width="1"/><path d="M12.6 6 L9.9 3.3 A1.55 1.55 0 0 1 12.6 1.6 A1.55 1.55 0 0 1 15.3 3.3 Z" fill="none" stroke="#e0623c" stroke-width="0.9" stroke-linejoin="round"/><path d="M3.6 9.3 V15.7 M0.4 12.5 H6.8" stroke="#3c9e3c" stroke-width="1.1"/><path d="M9.6 12 A3 3 0 0 1 14.8 10.4 M15.4 13 A3 3 0 0 1 10.2 14.6" fill="none" stroke="#201f1e" stroke-width="1.2"/><path d="M15.6 8.8 V11 H13.4 M9.4 16.2 V14 H11.6" fill="none" stroke="#201f1e" stroke-width="1"/></svg>
<svg class="a" style="left:113px;top:399px;" width="17" height="16" viewBox="0 0 17 16"><circle cx="3.6" cy="3.4" r="2.8" fill="none" stroke="#201f1e" stroke-width="1"/><path d="M1.7 1.5 L5.5 5.3" stroke="#201f1e" stroke-width="1"/><path d="M12.6 6 L9.9 3.3 A1.55 1.55 0 0 1 12.6 1.6 A1.55 1.55 0 0 1 15.3 3.3 Z" fill="none" stroke="#e0623c" stroke-width="0.9" stroke-linejoin="round"/><path d="M3.6 9.3 V15.7 M0.4 12.5 H6.8" stroke="#3c9e3c" stroke-width="1.1"/><path d="M9.6 12 A3 3 0 0 1 14.8 10.4 M15.4 13 A3 3 0 0 1 10.2 14.6" fill="none" stroke="#201f1e" stroke-width="1.2"/><path d="M15.6 8.8 V11 H13.4 M9.4 16.2 V14 H11.6" fill="none" stroke="#201f1e" stroke-width="1"/></svg>
<svg class="a" style="left:114.3px;top:431.4px;" width="15" height="15" viewBox="0 0 15 15"><path d="M8.6 3.2 H1.3 V12.7 H11.8 V6.8" fill="#fbfbfb" stroke="#3b3a39" stroke-width="1.2"/><path d="M2.1 10.9 L2.9 8.5 L12.2 1.1 L13.9 3.1 L4.6 10.4 Z" fill="#43a897" stroke="#f7f7f6" stroke-width="0.7" stroke-linejoin="round"/><path d="M3.9 9.3 L12.9 2.2" stroke="#bfe8df" stroke-width="0.6"/></svg>
<svg class="a" style="left:114.3px;top:463.4px;" width="15" height="15" viewBox="0 0 15 15"><path d="M8.6 3.2 H1.3 V12.7 H11.8 V6.8" fill="#fbfbfb" stroke="#3b3a39" stroke-width="1.2"/><path d="M2.1 10.9 L2.9 8.5 L12.2 1.1 L13.9 3.1 L4.6 10.4 Z" fill="#43a897" stroke="#f7f7f6" stroke-width="0.7" stroke-linejoin="round"/><path d="M3.9 9.3 L12.9 2.2" stroke="#bfe8df" stroke-width="0.6"/></svg>
<svg class="a" style="left:97px;top:500.5px;" width="10" height="6" viewBox="0 0 10 6"><path d="M0.5 0.5 L5 5 L9.5 0.5" fill="none" stroke="#8a8886" stroke-width="1"/></svg>
<div class="a" style="left:113px;top:495px;width:7px;height:7px;background:#4cc3c5;border:1px solid #2d8f94;"></div>
<div class="a" style="left:121.2px;top:495px;width:7px;height:7px;background:#fbc874;border:1px solid #eeb050;"></div>
<div class="a" style="left:113px;top:503.2px;width:7px;height:7px;background:#a9a9a9;border:1px solid #6e6e6e;"></div>
<div class="a" style="left:121.2px;top:503.2px;width:7px;height:7px;background:#72bf72;border:1px solid #4a9c4a;"></div>
<svg class="a" style="left:134.3px;top:527.4px;" width="15" height="15" viewBox="0 0 15 15"><path d="M8.6 3.2 H1.3 V12.7 H11.8 V6.8" fill="#fbfbfb" stroke="#3b3a39" stroke-width="1.2"/><path d="M2.1 10.9 L2.9 8.5 L12.2 1.1 L13.9 3.1 L4.6 10.4 Z" fill="#43a897" stroke="#f7f7f6" stroke-width="0.7" stroke-linejoin="round"/><path d="M3.9 9.3 L12.9 2.2" stroke="#bfe8df" stroke-width="0.6"/></svg>
<svg class="a" style="left:134.3px;top:559.4px;" width="15" height="15" viewBox="0 0 15 15"><path d="M8.6 3.2 H1.3 V12.7 H11.8 V6.8" fill="#fbfbfb" stroke="#3b3a39" stroke-width="1.2"/><path d="M2.1 10.9 L2.9 8.5 L12.2 1.1 L13.9 3.1 L4.6 10.4 Z" fill="#43a897" stroke="#f7f7f6" stroke-width="0.7" stroke-linejoin="round"/><path d="M3.9 9.3 L12.9 2.2" stroke="#bfe8df" stroke-width="0.6"/></svg>
<svg class="a" style="left:134.3px;top:591.4px;" width="15" height="15" viewBox="0 0 15 15"><path d="M8.6 3.2 H1.3 V12.7 H11.8 V6.8" fill="#fbfbfb" stroke="#3b3a39" stroke-width="1.2"/><path d="M2.1 10.9 L2.9 8.5 L12.2 1.1 L13.9 3.1 L4.6 10.4 Z" fill="#43a897" stroke="#f7f7f6" stroke-width="0.7" stroke-linejoin="round"/><path d="M3.9 9.3 L12.9 2.2" stroke="#bfe8df" stroke-width="0.6"/></svg>
<svg class="a" style="left:134.3px;top:623.4px;" width="15" height="15" viewBox="0 0 15 15"><path d="M8.6 3.2 H1.3 V12.7 H11.8 V6.8" fill="#fbfbfb" stroke="#3b3a39" stroke-width="1.2"/><path d="M2.1 10.9 L2.9 8.5 L12.2 1.1 L13.9 3.1 L4.6 10.4 Z" fill="#43a897" stroke="#f7f7f6" stroke-width="0.7" stroke-linejoin="round"/><path d="M3.9 9.3 L12.9 2.2" stroke="#bfe8df" stroke-width="0.6"/></svg>
<svg class="a" style="left:134.3px;top:655.4px;" width="15" height="15" viewBox="0 0 15 15"><path d="M8.6 3.2 H1.3 V12.7 H11.8 V6.8" fill="#fbfbfb" stroke="#3b3a39" stroke-width="1.2"/><path d="M2.1 10.9 L2.9 8.5 L12.2 1.1 L13.9 3.1 L4.6 10.4 Z" fill="#43a897" stroke="#f7f7f6" stroke-width="0.7" stroke-linejoin="round"/><path d="M3.9 9.3 L12.9 2.2" stroke="#bfe8df" stroke-width="0.6"/></svg>
<svg class="a" style="left:134.3px;top:687.4px;" width="15" height="15" viewBox="0 0 15 15"><path d="M8.6 3.2 H1.3 V12.7 H11.8 V6.8" fill="#fbfbfb" stroke="#3b3a39" stroke-width="1.2"/><path d="M2.1 10.9 L2.9 8.5 L12.2 1.1 L13.9 3.1 L4.6 10.4 Z" fill="#43a897" stroke="#f7f7f6" stroke-width="0.7" stroke-linejoin="round"/><path d="M3.9 9.3 L12.9 2.2" stroke="#bfe8df" stroke-width="0.6"/></svg>
<svg class="a" style="left:134.3px;top:719.4px;" width="15" height="15" viewBox="0 0 15 15"><path d="M8.6 3.2 H1.3 V12.7 H11.8 V6.8" fill="#fbfbfb" stroke="#3b3a39" stroke-width="1.2"/><path d="M2.1 10.9 L2.9 8.5 L12.2 1.1 L13.9 3.1 L4.6 10.4 Z" fill="#43a897" stroke="#f7f7f6" stroke-width="0.7" stroke-linejoin="round"/><path d="M3.9 9.3 L12.9 2.2" stroke="#bfe8df" stroke-width="0.6"/></svg>
<svg class="a" style="left:134.3px;top:751.4px;" width="15" height="15" viewBox="0 0 15 15"><path d="M8.6 3.2 H1.3 V12.7 H11.8 V6.8" fill="#fbfbfb" stroke="#3b3a39" stroke-width="1.2"/><path d="M2.1 10.9 L2.9 8.5 L12.2 1.1 L13.9 3.1 L4.6 10.4 Z" fill="#43a897" stroke="#f7f7f6" stroke-width="0.7" stroke-linejoin="round"/><path d="M3.9 9.3 L12.9 2.2" stroke="#bfe8df" stroke-width="0.6"/></svg>
<svg class="a" style="left:134.3px;top:783.4px;" width="15" height="15" viewBox="0 0 15 15"><path d="M8.6 3.2 H1.3 V12.7 H11.8 V6.8" fill="#fbfbfb" stroke="#3b3a39" stroke-width="1.2"/><path d="M2.1 10.9 L2.9 8.5 L12.2 1.1 L13.9 3.1 L4.6 10.4 Z" fill="#43a897" stroke="#f7f7f6" stroke-width="0.7" stroke-linejoin="round"/><path d="M3.9 9.3 L12.9 2.2" stroke="#bfe8df" stroke-width="0.6"/></svg>
<svg class="a" style="left:134.3px;top:815.4px;" width="15" height="15" viewBox="0 0 15 15"><path d="M8.6 3.2 H1.3 V12.7 H11.8 V6.8" fill="#fbfbfb" stroke="#3b3a39" stroke-width="1.2"/><path d="M2.1 10.9 L2.9 8.5 L12.2 1.1 L13.9 3.1 L4.6 10.4 Z" fill="#43a897" stroke="#f7f7f6" stroke-width="0.7" stroke-linejoin="round"/><path d="M3.9 9.3 L12.9 2.2" stroke="#bfe8df" stroke-width="0.6"/></svg>
<svg class="a" style="left:114.3px;top:847.4px;" width="15" height="15" viewBox="0 0 15 15"><path d="M8.6 3.2 H1.3 V12.7 H11.8 V6.8" fill="#fbfbfb" stroke="#3b3a39" stroke-width="1.2"/><path d="M2.1 10.9 L2.9 8.5 L12.2 1.1 L13.9 3.1 L4.6 10.4 Z" fill="#43a897" stroke="#f7f7f6" stroke-width="0.7" stroke-linejoin="round"/><path d="M3.9 9.3 L12.9 2.2" stroke="#bfe8df" stroke-width="0.6"/></svg>
<svg class="a" style="left:94.3px;top:879.4px;" width="15" height="15" viewBox="0 0 15 15"><path d="M8.6 3.2 H1.3 V12.7 H11.8 V6.8" fill="#fbfbfb" stroke="#3b3a39" stroke-width="1.2"/><path d="M2.1 10.9 L2.9 8.5 L12.2 1.1 L13.9 3.1 L4.6 10.4 Z" fill="#43a897" stroke="#f7f7f6" stroke-width="0.7" stroke-linejoin="round"/><path d="M3.9 9.3 L12.9 2.2" stroke="#bfe8df" stroke-width="0.6"/></svg>
<svg class="a" style="left:417px;top:874px;" width="12" height="36" viewBox="0 0 12 36"><path d="M0 0 L11 18 L0 36 Z" fill="#eeeeee" stroke="none"/><path d="M1 0 L11 18 L1 36" fill="none" stroke="#dadada" stroke-width="1"/></svg>
<svg class="a" style="left:542px;top:874px;" width="12" height="36" viewBox="0 0 12 36"><path d="M0 0 L11 18 L0 36 Z" fill="#eeeeee" stroke="none"/><path d="M1 0 L11 18 L1 36" fill="none" stroke="#dadada" stroke-width="1"/></svg>
<div class="a" style="left:344px;top:887.3px;width:16px;height:11.5px;background:#ffffff;border:1.2px solid #323130;border-radius:1.5px;"></div>
<div class="a" style="left:437px;top:885.6px;width:7px;height:7px;background:#4cc3c5;border:1px solid #2d8f94;"></div>
<div class="a" style="left:445.2px;top:885.6px;width:7px;height:7px;background:#fbc874;border:1px solid #eeb050;"></div>
<div class="a" style="left:437px;top:893.8000000000001px;width:7px;height:7px;background:#a9a9a9;border:1px solid #6e6e6e;"></div>
<div class="a" style="left:445.2px;top:893.8000000000001px;width:7px;height:7px;background:#72bf72;border:1px solid #4a9c4a;"></div>
<svg class="a" style="left:562px;top:885px;" width="17" height="16" viewBox="0 0 17 16"><circle cx="3.6" cy="3.4" r="2.8" fill="none" stroke="#201f1e" stroke-width="1"/><path d="M1.7 1.5 L5.5 5.3" stroke="#201f1e" stroke-width="1"/><path d="M12.6 6 L9.9 3.3 A1.55 1.55 0 0 1 12.6 1.6 A1.55 1.55 0 0 1 15.3 3.3 Z" fill="none" stroke="#e0623c" stroke-width="0.9" stroke-linejoin="round"/><path d="M3.6 9.3 V15.7 M0.4 12.5 H6.8" stroke="#3c9e3c" stroke-width="1.1"/><path d="M9.6 12 A3 3 0 0 1 14.8 10.4 M15.4 13 A3 3 0 0 1 10.2 14.6" fill="none" stroke="#201f1e" stroke-width="1.2"/><path d="M15.6 8.8 V11 H13.4 M9.4 16.2 V14 H11.6" fill="none" stroke="#201f1e" stroke-width="1"/></svg>
<div class="a" style="left:1278px;top:892px;width:11px;height:1px;background:#8a8886;"></div>
<div class="a" style="left:1305px;top:892px;width:160px;height:2px;background:#4a4a4a;"></div>
<div class="a" style="left:1370px;top:887px;width:2.8px;height:12px;background:#4a4a4a;"></div>
<div class="a" style="left:1367.8px;top:888.5px;width:1px;height:9px;background:#4a4a4a;"></div>
<div class="a" style="left:1478px;top:892px;width:11px;height:1px;background:#605e5c;"></div>
<div class="a" style="left:1483px;top:887px;width:1px;height:11px;background:#605e5c;"></div>
<svg class="a" style="left:1564px;top:886px;" width="15" height="15" viewBox="0 0 15 15"><path d="M1 14 L14 1 M8.6 1 H14 V6.4 M1 8.6 V14 H6.4" fill="none" stroke="#201f1e" stroke-width="1.2"/></svg>
<svg class="a" style="left:1877px;top:237px;" width="16" height="16" viewBox="0 0 16 16"><circle cx="10" cy="5.8" r="4.8" fill="none" stroke="#c8c6c4" stroke-width="1.1"/><path d="M6.6 9.4 L0.6 15.4" stroke="#c8c6c4" stroke-width="1.1"/></svg>
</div>
</body></html>
